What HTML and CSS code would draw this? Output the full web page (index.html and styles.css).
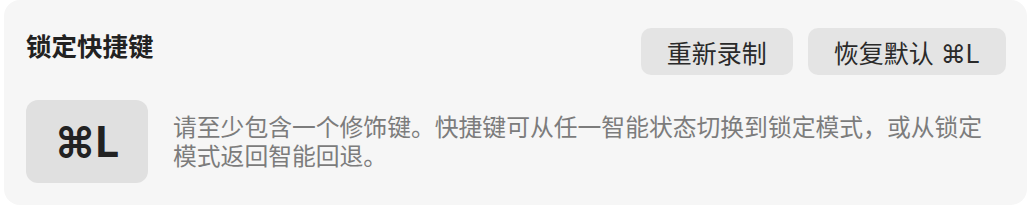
FILE: index.html
```html
<!DOCTYPE html>
<html lang="zh-CN">
<head>
  <meta charset="UTF-8">
  <meta name="viewport" content="width=device-width, initial-scale=1.0">
  <title>锁定快捷键</title>
  <link rel="stylesheet" href="styles.css">
</head>
<body>
  <div class="card">
    <div class="header">
      <h2 class="title">锁定快捷键</h2>
      <div class="actions">
        <button class="btn">重新录制</button>
        <button class="btn">恢复默认 ⌘L</button>
      </div>
    </div>
    <div class="content">
      <div class="keycap">⌘L</div>
      <p class="hint">请至少包含一个修饰键。快捷键可从任一智能状态切换到锁定模式，或从锁定模式返回智能回退。</p>
    </div>
  </div>
</body>
</html>
```

FILE: styles.css
```css
body {
  margin: 0;
  padding: 0 7px 4px 4px;
  background-color: #fff;
  font-family: Inter, "Noto Sans CJK SC", "DejaVu Sans", sans-serif;
  color: #222;
}

.card {
  background-color: #f6f6f6;
  border-radius: 16px;
  padding: 28px 21px 22px 22px;
  height: 205px;
  box-sizing: border-box;
}

.header {
  display: flex;
  justify-content: space-between;
  align-items: center;
}

.title {
  margin: 0 0 10px 0;
  font-size: 25.5px;
  line-height: 30px;
  font-weight: 700;
  color: #222;
}

.actions {
  display: flex;
  gap: 15px;
}

.btn {
  height: 47px;
  padding: 0 26px;
  border: none;
  border-radius: 10px;
  background-color: #e4e4e4;
  color: #2a2a2a;
  font-family: inherit;
  font-size: 25px;
  cursor: pointer;
}

.content {
  display: flex;
  align-items: center;
  gap: 25px;
  margin-top: 25px;
}

.keycap {
  flex: none;
  width: 122px;
  height: 83px;
  border-radius: 12px;
  background-color: #e0e0e0;
  display: flex;
  justify-content: center;
  align-items: center;
  font-size: 42px;
  font-weight: 700;
  color: #222;
}

.hint {
  margin: 0;
  padding-right: 14px;
  font-size: 23.8px;
  line-height: 29px;
  color: #7c7c7c;
}
```
